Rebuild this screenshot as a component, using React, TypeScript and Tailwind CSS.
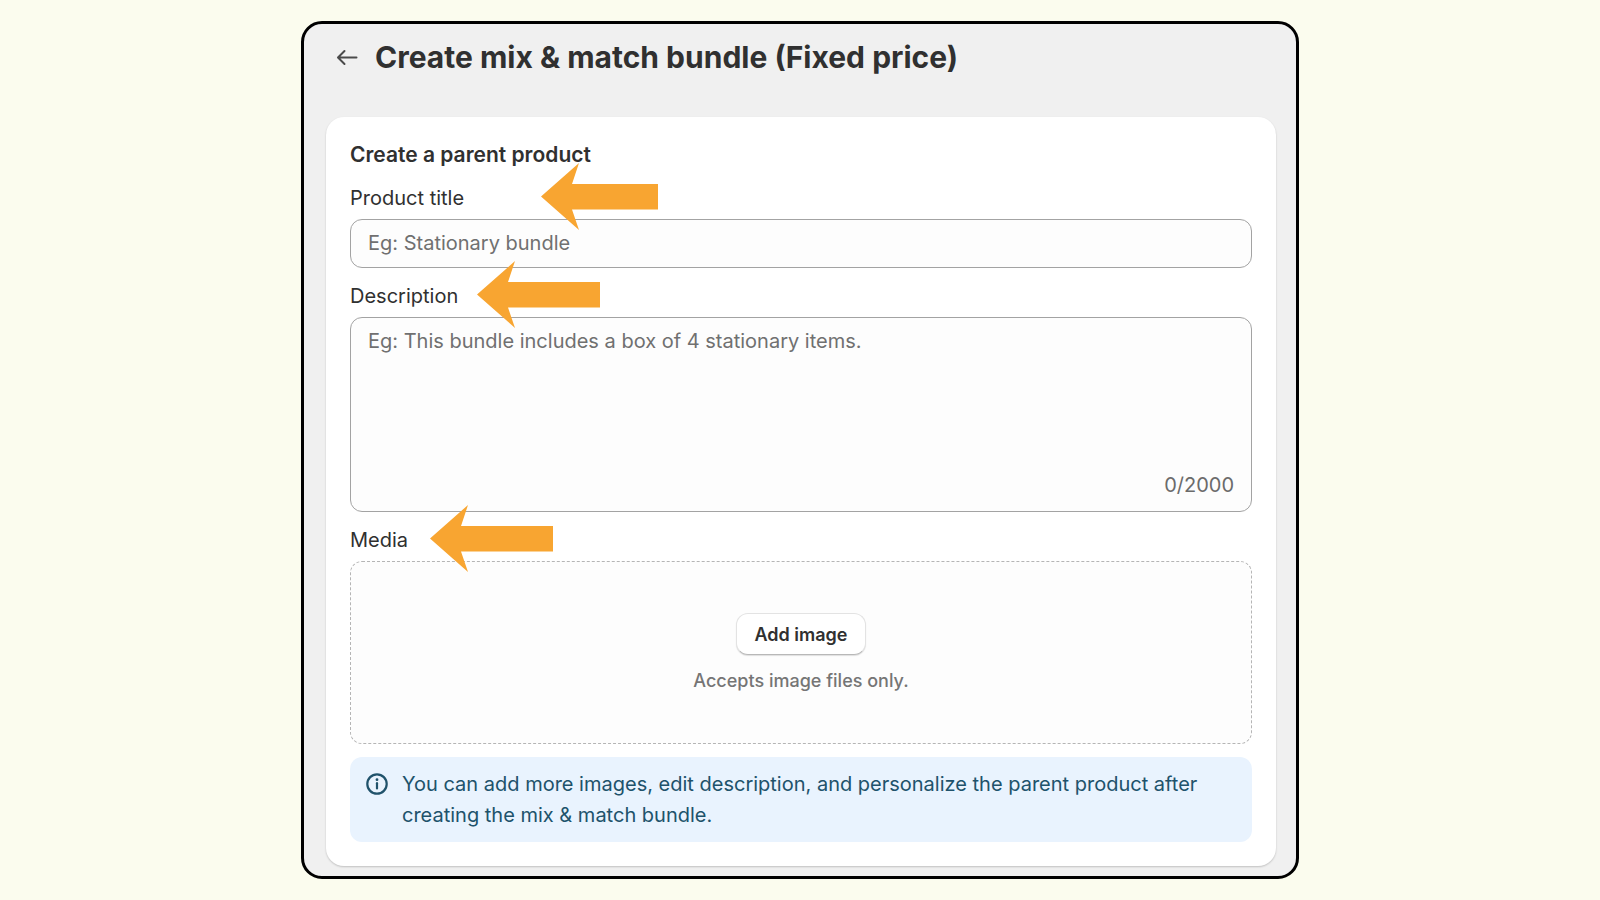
import type { ReactNode } from "react";

function PointerArrow({ width, className }: { width: number; className: string }) {
  return (
    <svg
      width={width}
      height={67}
      fill="#f8a531"
      aria-hidden="true"
      className={`pointer-events-none absolute -top-5 z-10 ${className}`}
    >
      <path d="M0 33.5 38 0 31 21H123V46.5H31L38 67Z" />
    </svg>
  );
}

function FieldLabel({ htmlFor, arrow, children }: { htmlFor: string; arrow: ReactNode; children: ReactNode }) {
  return (
    <div className="relative mb-[5px]">
      <label htmlFor={htmlFor}>{children}</label>
      {arrow}
    </div>
  );
}

function InfoIcon() {
  return (
    <svg viewBox="0 0 22 22" fill="none" aria-hidden="true" className="mt-1 size-[22px] shrink-0">
      <circle cx="11" cy="11" r="9.7" stroke="currentColor" strokeWidth="2.2" />
      <path d="M11 10.2v5.2" stroke="currentColor" strokeWidth="2.2" strokeLinecap="round" />
      <circle cx="11" cy="6.7" r="1.4" fill="currentColor" />
    </svg>
  );
}

export default function App() {
  return (
    <div className="flex min-h-screen items-center justify-center bg-[#fbfcee] font-['Inter','Liberation_Sans',sans-serif] text-[20px] leading-[31px] text-[#303030]">
      <main className="w-full max-w-[998px] rounded-[21px] border-[3px] border-black bg-[#f0f0f0] pr-5 pb-2.5 pl-[22px]">
        <header className="flex h-[93px] items-start gap-[17px] pt-3 pl-2.5">
          <button type="button" aria-label="Back" className="mt-2.5 text-[#4a4a4a]">
            <svg width="22" height="22" viewBox="0 0 22 22" fill="none" aria-hidden="true">
              <path
                d="M20.5 11.5H2.5M8.5 5 2 11.5 8.5 18"
                stroke="currentColor"
                strokeWidth="2"
                strokeLinecap="round"
                strokeLinejoin="round"
              />
            </svg>
          </button>
          <h1 className="text-[30px] leading-[42px] font-bold">Create mix &amp; match bundle (Fixed price)</h1>
        </header>

        <form className="flex flex-col gap-[13px] rounded-[18px] bg-white px-6 pt-[22px] pb-6 shadow-[0_1px_2px_rgba(0,0,0,0.2)]">
          <h2 className="text-[21px] font-semibold">Create a parent product</h2>

          <div>
            <FieldLabel htmlFor="title" arrow={<PointerArrow width={117} className="left-[191px]" />}>
              Product title
            </FieldLabel>
            <input
              id="title"
              type="text"
              placeholder="Eg: Stationary bundle"
              className="block h-[49px] w-full rounded-xl border border-[#a3a3a3] bg-[#fdfdfd] px-[17px] pb-0.5 placeholder:text-[#707070]"
            />
          </div>

          <div>
            <FieldLabel htmlFor="description" arrow={<PointerArrow width={123} className="left-[127px]" />}>
              Description
            </FieldLabel>
            <div className="relative">
              <textarea
                id="description"
                maxLength={2000}
                placeholder="Eg: This bundle includes a box of 4 stationary items."
                className="block h-[195px] w-full resize-none rounded-xl border border-[#a3a3a3] bg-[#fdfdfd] px-[17px] py-2 placeholder:text-[#707070]"
              />
              <span className="absolute right-[18px] bottom-[11px] text-[#6b6b6b]">0/2000</span>
            </div>
          </div>

          <div>
            <FieldLabel htmlFor="media" arrow={<PointerArrow width={123} className="left-20" />}>
              Media
            </FieldLabel>
            <div className="flex h-[183px] flex-col items-center justify-center gap-2.5 rounded-xl border border-dashed border-[#b5b5b5] bg-[#fdfdfd] pt-1">
              <button
                id="media"
                type="button"
                className="h-[42px] rounded-xl border border-[#e3e3e3] border-b-[#b8b8b8] bg-white px-[18px] text-[18px] font-semibold shadow-[0_1px_1px_rgba(0,0,0,0.12)]"
              >
                Add image
              </button>
              <p className="text-[18px] font-medium text-[#757575]">Accepts image files only.</p>
            </div>
          </div>

          <div className="flex gap-3.5 rounded-xl bg-[#e9f3fe] px-4 pt-3 pb-[11px] text-[#20526b]">
            <InfoIcon />
            <p>
              You can add more images, edit description, and personalize the parent product after creating the mix &amp;
              match bundle.
            </p>
          </div>
        </form>
      </main>
    </div>
  );
}
